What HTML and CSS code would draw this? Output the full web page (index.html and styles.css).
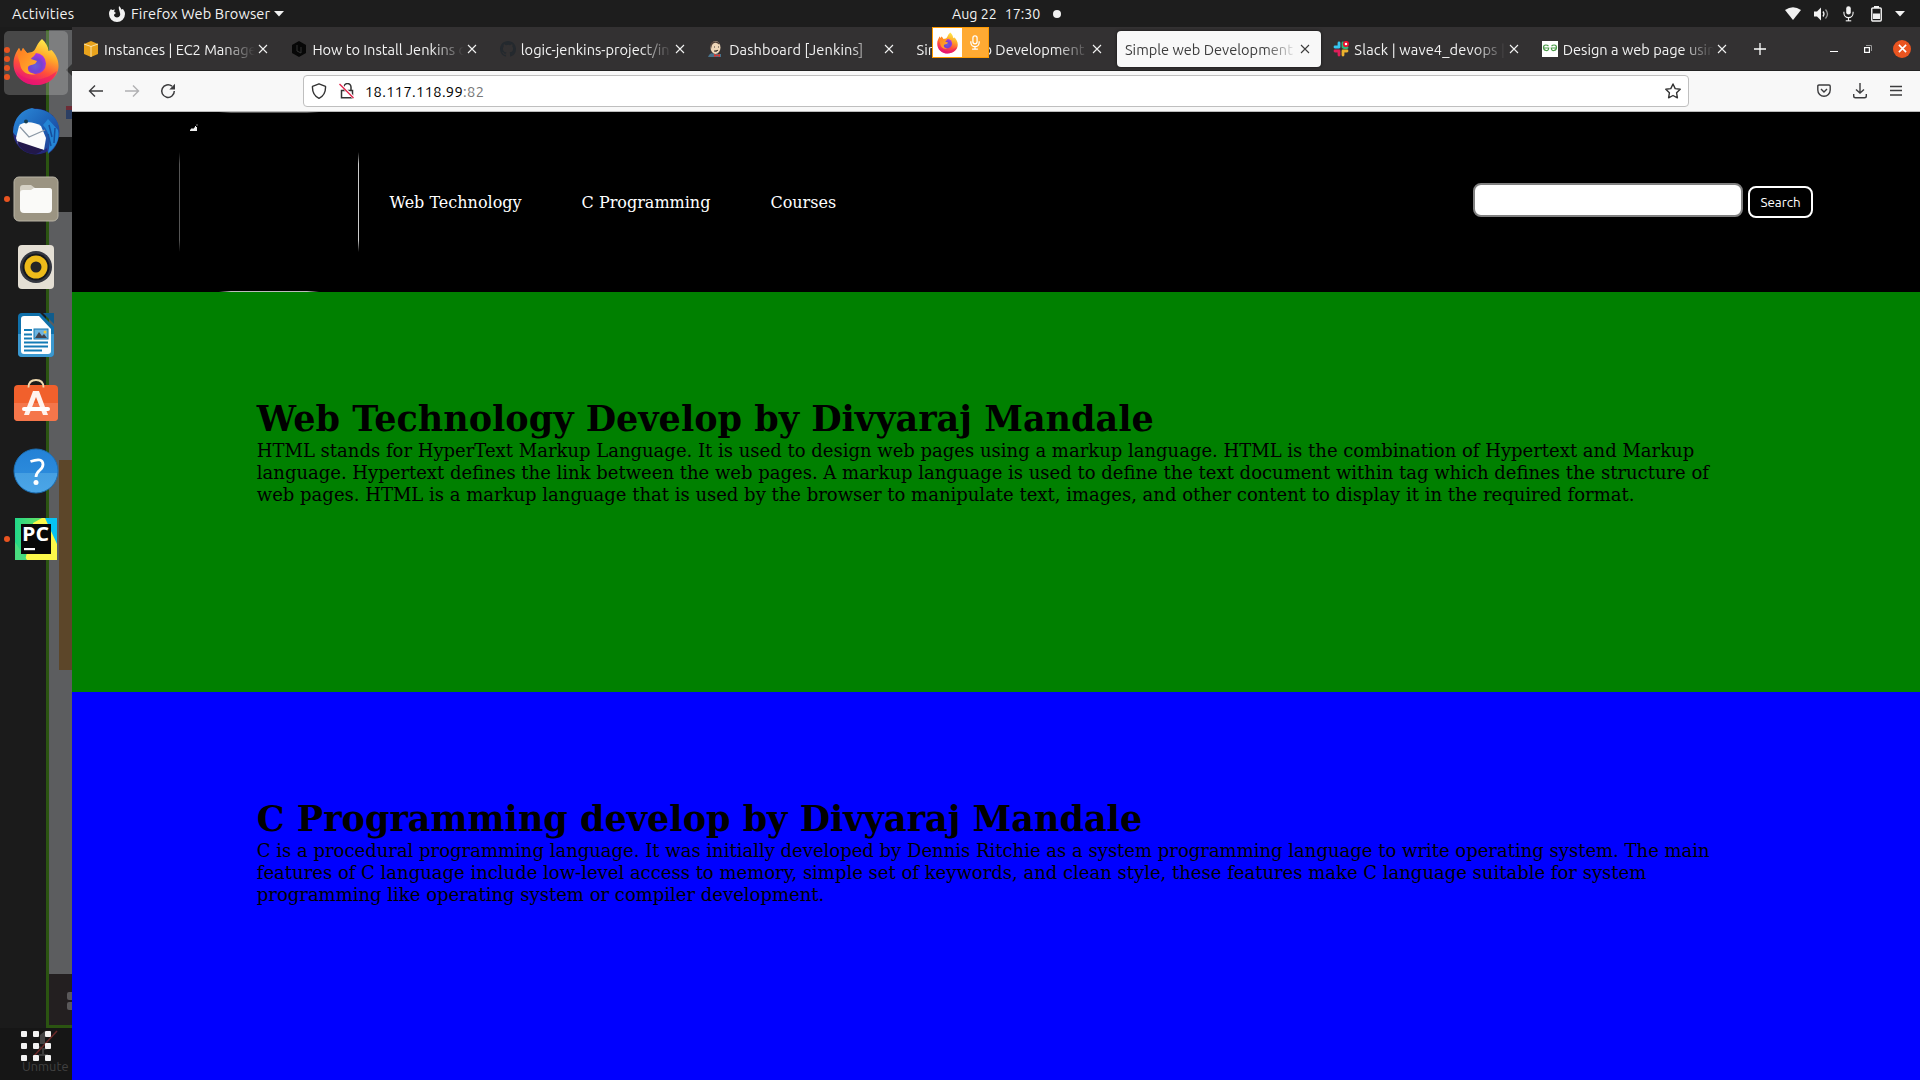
FILE: index.html
```html
<!DOCTYPE html>
<html lang="en">
<head>
<meta charset="utf-8">
<title>Simple web Development</title>
<link rel="stylesheet" href="styles.css">
</head>
<body>
<svg class="defs" width="0" height="0" aria-hidden="true">
  <defs>
    <linearGradient id="fxBody" x1=".75" y1="0" x2=".35" y2="1"><stop offset="0" stop-color="#fff44f"/><stop offset=".35" stop-color="#ffa92a"/><stop offset=".65" stop-color="#ff4f3a"/><stop offset="1" stop-color="#e60f7c"/></linearGradient>
    <radialGradient id="fxGlobe" cx=".5" cy=".6" r=".6"><stop offset="0" stop-color="#6560d8"/><stop offset=".5" stop-color="#7542d0"/><stop offset="1" stop-color="#b833e1"/></radialGradient>
    <linearGradient id="fxHead" x1="0" y1="0" x2="1" y2="1"><stop offset="0" stop-color="#ff7a22"/><stop offset="1" stop-color="#ffb52b"/></linearGradient>
    <linearGradient id="blueHalf" x1="0" y1="0" x2="0" y2="1"><stop offset="0" stop-color="#2381d6"/><stop offset=".54" stop-color="#2b8adb"/><stop offset=".55" stop-color="#459fe2"/><stop offset="1" stop-color="#4ba6e8"/></linearGradient>
    <linearGradient id="tbird" x1="0" y1="0" x2="1" y2="1"><stop offset="0" stop-color="#2d8cdb"/><stop offset=".5" stop-color="#1c62b7"/><stop offset="1" stop-color="#25368a"/></linearGradient>
    <linearGradient id="pyc" x1="0" y1="0" x2="1" y2="0"><stop offset="0" stop-color="#21d789"/><stop offset=".5" stop-color="#5be06a"/><stop offset="1" stop-color="#20d0a0"/></linearGradient>
    <symbol id="firefox" viewBox="0 0 46 48">
      <path d="M29 1c4 4 6 7 6.500 12l3-1c4 4 7 9 7 16 0 11-10 19-22.500 19S.5 38 .5 26C.5 19 3 14 6 10l2 4 2-4 4 5 5-1c4-1 4-8 10-13z" fill="url(#fxBody)"/>
      <circle cx="22.500" cy="25.500" r="10.500" fill="url(#fxGlobe)"/>
      <path d="M6 10l2 4 2-4 4 5h9c-2 4-4 4-5 6l6 2c-2 5-7 3-9 6-1 5 4 7 8 7-8 2-15-2-16-10-1-5-4-9-1-16z" fill="url(#fxHead)"/>
      <path d="M3 33c8 10 25 13 41 0-3 9-11 14-21 14S6 42 3 33z" fill="#e8146f" opacity=".55"/>
    </symbol>
    <symbol id="x" viewBox="0 0 10 10"><path d="M1 1l8 8M9 1L1 9" fill="none" stroke="currentColor" stroke-width="1.100"/></symbol>
    <symbol id="mic" viewBox="0 0 12 18"><rect x="3.500" y="1" width="5" height="9" rx="2.500"/><path d="M1 7v1.500a5 5 0 0010 0V7M6 13.500V17M3 17h6" fill="none" stroke="currentColor" stroke-width="1.200"/></symbol>
  </defs>
</svg>

<header class="topbar">
  <span class="activities">Activities</span>
  <div class="appmenu">
    <svg width="16" height="16" viewBox="0 0 16 16"><path d="M10 0c1 1 2 2 2.300 3.500L14 3c1 1.500 2 3 2 5a8 8 0 01-16 0c0-2 .5-3.500 2-5l1 1 3-.5c-1 1.500-1 2-.5 2.500L7 7c-1 1-2 1-2 2.500C6 12 10 12 11 9.500 12 7 9 4 10 0z" fill="#f2f2f2"/></svg>
    <span class="appname">Firefox Web Browser</span>
    <svg class="caret" width="10" height="6" viewBox="0 0 10 6"><path d="M0 0h10L5 5.500z" fill="#f2f2f2"/></svg>
  </div>
  <div class="clock"><span>Aug 22</span><span>17:30</span><i></i></div>
  <div class="status">
    <svg width="16" height="13" viewBox="0 0 16 13"><path d="M0 3Q8-2.500 16 3L8 13z" fill="#f2f2f2"/></svg>
    <svg width="16" height="14" viewBox="0 0 16 14"><path d="M0 4.500h3L7 .5v13L3 9.500H0z" fill="#f2f2f2"/><path d="M9 4.500q2 2.500 0 5" fill="none" stroke="#f2f2f2" stroke-width="1.300"/><path d="M11.500 2.500q4 4.500 0 9" fill="none" stroke="#999" stroke-width="1.300"/></svg>
    <svg width="11" height="17" viewBox="0 0 12 18" color="#f2f2f2" fill="#f2f2f2"><use href="#mic"/></svg>
    <svg class="battery" width="11" height="16" viewBox="0 0 11 16"><path d="M3 0h5v2H3zM2 7.500h7V13H2z" fill="#f2f2f2"/><rect x=".75" y="2" width="9.500" height="13" rx="1" fill="none" stroke="#f2f2f2" stroke-width="1.400"/></svg>
    <svg width="10" height="6" viewBox="0 0 10 6"><path d="M0 0h10L5 5.500z" fill="#f2f2f2"/></svg>
  </div>
</header>

<div class="desktop">
  <aside class="dock">
    <div class="behind">
      <div class="behind-window"><div class="b-top"></div><div class="b-dark"></div><div class="b-body"><div class="b-brown"></div></div><div class="b-foot"><i></i><i></i></div></div>
      <div class="b-arrow"></div><div class="b-mark"></div>
    </div>
    <ul class="apps">
      <li class="app current"><span class="dots"><i></i><i></i><i></i><i></i></span><svg class="fx" width="46" height="48"><use href="#firefox"/></svg></li>
      <li class="app"><svg width="48" height="48" viewBox="0 0 48 48"><circle cx="24" cy="24.500" r="23" fill="#25277a"/><path d="M1 25C2 10 10 3 20 1l3 1c14 0 25 10 24.500 23C47 36 42 43 36 47l-1-6-6 4 2-9L8 30C3 29 2 27 1 25z" fill="url(#tbird)"/><path d="M7 19c4-5 14-5 22 0l5 12-2 12L6 37 4 31z" fill="#fbfbfb"/><path d="M8 20l9 10 16-7" fill="none" stroke="#8b98a5" stroke-width="1.200"/><path d="M5 34l27 9-8 4C15 47 8 43 5 34z" fill="#22184a"/><path d="M31 18c7 8 8 17 5 28 8-6 12-14 10-23L36 12z" fill="#2385d5"/><path d="M37 18l3 12m3-9l-1 15m-6-9l3 12" stroke="#164e9d" stroke-width="1.500"/><circle cx="14" cy="14.500" r="2" fill="#173e4f"/></svg></li>
      <li class="app"><span class="dots"><i></i></span><svg width="46" height="46" viewBox="0 0 46 46"><rect x="1" y="1" width="44" height="44" rx="5" fill="#9b9482" stroke="#b9b4a5"/><path d="M7 12q0-3 3-3h8l4 3h14q3 0 3 3v8H7z" fill="#d5d1c5"/><path d="M7 17q0-3 3-3h8l3-2h15q3 0 3 3v18q0 4-4 4H11q-4 0-4-4z" fill="#fafaf8"/></svg></li>
      <li class="app"><svg width="38" height="46" viewBox="0 0 38 46"><rect x="1" y="1" width="36" height="44" rx="4" fill="#e4dfd4"/><circle cx="19" cy="23" r="16" fill="#343740"/><circle cx="19" cy="23" r="13.500" fill="#16191d"/><circle cx="19" cy="23" r="11.500" fill="#edbb1a"/><circle cx="19" cy="23" r="5.500" fill="#242526"/></svg></li>
      <li class="app"><svg width="38" height="46" viewBox="0 0 38 46"><path d="M5 1h18l14 14v26q0 4-4 4H5q-4 0-4-4V5q0-4 4-4z" fill="#0f70aa"/><path d="M1 22h36v19q0 4-4 4H5q-4 0-4-4z" fill="#3b98cf"/><path d="M26 1h11v11z" fill="#105c8b"/><path d="M7 4h15l12 13v22q0 3-3 3H7q-3 0-3-3V7q0-3 3-3z" fill="#fff"/><path d="M7 18h8M7 22.500h8M7 26.500h8M7 30.500h24M7 34.500h24M7 38.500h18" stroke="#137bb5" stroke-width="2"/><rect x="17" y="17" width="14" height="10" fill="#6db4e1"/><path d="M18 26l4-6 3 4 2-2 3 4z" fill="#42434c"/><circle cx="28" cy="20" r="1.500" fill="#f4c637"/><rect x="17" y="17" width="14" height="10" fill="none" stroke="#1779b1"/></svg></li>
      <li class="app"><svg width="46" height="46" viewBox="0 0 46 46"><rect x="1" y="7" width="44" height="36" rx="4" fill="#f1602c"/><path d="M1 25h44v14q0 4-4 4H5q-4 0-4-4z" fill="#f5764a"/><path d="M15.500 9.500q0-7.500 7.500-7.500t7.500 7.500" fill="none" stroke="#f0dab0" stroke-width="1.800"/><path d="M20 13h6l9 24h-5l-7-18-7 18h-5z" fill="#fff3ee"/><rect x="9" y="29" width="28" height="4" rx="2" fill="#fff"/></svg></li>
      <li class="app"><svg width="46" height="46" viewBox="0 0 46 46"><circle cx="23" cy="23" r="22" fill="url(#blueHalf)" stroke="#1c70b5"/><path d="M17.500 13.500q12.500-4.500 12.500 3c0 6-7 5.500-7 12.500" fill="none" stroke="#fff" stroke-width="2.800"/><circle cx="23" cy="34.500" r="2.500" fill="#fff"/></svg></li>
      <li class="app"><span class="dots"><i></i></span><svg width="42" height="42" viewBox="0 0 42 42"><path d="M0 0h42v42H0z" fill="url(#pyc)"/><path d="M30 0h12v32z" fill="#07c3f2"/><path d="M18 5l9-5h3l12 26v16H10l8-30z" fill="#fcf84a"/><path d="M0 24l12 18H0z" fill="#49dc7f"/><rect x="6" y="6" width="30" height="30" fill="#080808"/><text x="7" y="23" textLength="27" lengthAdjust="spacingAndGlyphs" class="pc">PC</text><path d="M9 30h11v2.200H9z" fill="#fff"/></svg></li>
    </ul>
    <div class="launcher">
      <svg width="38" height="32" viewBox="0 0 38 32" fill="#f2f2f2"><path d="M20 5l5-4v13h-5z" fill="#444"/><path d="M18 16q6 6 12 0M23 19v6m-4 0h9" stroke="#3c3c3c" stroke-width="2" fill="none"/><path d="M13 27L37 1" stroke="#6b2a2a" stroke-width="1.500"/><g><rect x="1" y="1" width="6" height="6" rx="1"/><rect x="13" y="1" width="6" height="6" rx="1"/><rect x="25" y="1" width="6" height="6" rx="1"/><rect x="1" y="13" width="6" height="6" rx="1"/><rect x="13" y="13" width="6" height="6" rx="1"/><rect x="25" y="13" width="6" height="6" rx="1"/><rect x="1" y="25" width="6" height="6" rx="1"/><rect x="13" y="25" width="6" height="6" rx="1"/><rect x="25" y="25" width="6" height="6" rx="1"/></g></svg>
      <span class="unmute">Unmute</span>
    </div>
  </aside>

  <main class="browser">
    <div class="tabstrip">
      <div class="tab"><svg width="16" height="16" viewBox="0 0 16 16"><path d="M1 3l7-3 7 3v10l-7 3-7-3z" fill="#e9a31c"/><path d="M1 3l7 2.500L15 3M8 5.500V16" stroke="#fff0c8" fill="none" stroke-width=".8"/></svg><span class="title">Instances | EC2 Manage</span><svg class="x" width="10" height="10"><use href="#x"/></svg></div>
      <div class="tab"><svg width="16" height="16" viewBox="0 0 16 16"><path d="M8 0l7 4v8l-7 4-7-4V4z" fill="#070707"/><path d="M6 4v6l4 2V6" fill="none" stroke="#333"/></svg><span class="title">How to Install Jenkins o</span><svg class="x" width="10" height="10"><use href="#x"/></svg></div>
      <div class="tab"><svg width="16" height="16" viewBox="0 0 16 16"><path d="M8 0C3.580 0 0 3.580 0 8c0 3.540 2.290 6.530 5.470 7.590.4.070.55-.17.55-.38v-1.490c-2.010.37-2.530-.49-2.690-.94-.09-.23-.48-.94-.82-1.130-.28-.15-.68-.52-.01-.53.63-.01 1.080.58 1.230.82.72 1.210 1.870.87 2.330.66.070-.52.28-.87.51-1.070-1.780-.2-3.640-.89-3.640-3.950 0-.87.31-1.590.82-2.150-.08-.2-.36-1.020.08-2.120 0 0 .67-.21 2.200.82a7.600 7.600 0 014 0c1.530-1.040 2.200-.82 2.200-.82.44 1.100.16 1.920.08 2.120.51.560.82 1.270.82 2.150 0 3.070-1.870 3.750-3.650 3.950.29.25.54.73.54 1.480v2.200c0 .21.15.46.55.38A8 8 0 0016 8c0-4.420-3.580-8-8-8z" fill="#24292e"/></svg><span class="title">logic-jenkins-project/in</span><svg class="x" width="10" height="10"><use href="#x"/></svg></div>
      <div class="tab"><svg width="16" height="16" viewBox="0 0 16 16"><path d="M1 14q2-3 5-1h7v3H0z" fill="#49728b"/><ellipse cx="7.500" cy="6.500" rx="5" ry="6.500" fill="#efd6b8"/><path d="M3 8Q1 2 5 .5q4-1 7 2l-1 1Q7 0 4 4z" fill="#55443c"/><path d="M6 6h1m3 0h1M6 10q3 1 4-1" stroke="#403630"/><path d="M6 13l3 1 3-1v3l-3-1-3 1z" fill="#d33833"/></svg><span class="title whole">Dashboard [Jenkins]</span><svg class="x" width="10" height="10"><use href="#x"/></svg></div>
      <div class="tab"><span class="title">Simple web Development</span><svg class="x" width="10" height="10"><use href="#x"/></svg></div>
      <div class="tab active"><span class="title">Simple web Development</span><svg class="x" width="10" height="10"><use href="#x"/></svg></div>
      <div class="tab"><svg width="16" height="16" viewBox="0 0 16 16" stroke-width="2.800" stroke-linecap="round"><path d="M6 2v4M2 6h4" stroke="#36c5f0"/><path d="M10 2v4" stroke="#2eb67d"/><path d="M10 10h4M10 10v4" stroke="#ecb22e"/><path d="M2 10h4M6 10v4" stroke="#e01e5a"/><path d="M11 6.500h3" stroke="#2eb67d"/><circle cx="13" cy="3" r="2.200" fill="#fff" stroke="#e8102e" stroke-width="1.800"/></svg><span class="title slack">Slack | wave4_devops |</span><svg class="x" width="10" height="10"><use href="#x"/></svg></div>
      <div class="tab"><svg width="16" height="16" viewBox="0 0 16 16"><path d="M0 0h16v16H0z" fill="#fff"/><path d="M6.500 5.200Q5.500 4 3.800 4 1.500 4 1.500 6.500T4 9.500 6.700 7H1M9.500 5.200Q10.500 4 12.200 4q2.300 0 2.300 2.500T12 9.500 9.300 7H15" fill="none" stroke="#4a9b48" stroke-width="1.200"/></svg><span class="title">Design a web page usin</span><svg class="x" width="10" height="10"><use href="#x"/></svg></div>
      <svg class="plus" width="12" height="12" viewBox="0 0 12 12"><path d="M6 0v12M0 6h12" stroke="#fff" stroke-width="1.300"/></svg>
      <div class="wincontrols">
        <svg width="8" height="8" viewBox="0 0 8 8"><path d="M0 6.500h8" stroke="#fff"/></svg>
        <svg width="8" height="8" viewBox="0 0 8 8"><rect x=".6" y="2.600" width="4.800" height="4.800" fill="none" stroke="#fff" stroke-width="1.200"/><path d="M2 .5h5.500V6" fill="none" stroke="#999"/></svg>
        <span class="winclose"><svg width="9" height="9" viewBox="0 0 10 10"><path d="M1 1l8 8M9 1L1 9" stroke="#fff" stroke-width="1.800"/></svg></span>
      </div>
      <div class="sharing"><span><svg width="21" height="22" viewBox="0 0 46 48"><use href="#firefox"/></svg></span><span class="sharing-mic"><svg width="10" height="15" viewBox="0 0 12 18" fill="none" stroke="#fff" stroke-width="1.500"><rect x="3.500" y="1" width="5" height="9.500" rx="2.500"/><path d="M1 7.500V9a5 5 0 0010 0V7.500M6 14v3M2.500 17h7"/></svg></span></div>
    </div>

    <div class="toolbar">
      <div class="navbuttons">
        <svg width="16" height="14" viewBox="0 0 16 14"><path d="M15 7H1.500M7 1.500L1.500 7 7 12.500" fill="none" stroke="#3c3c3e" stroke-width="1.400"/></svg>
        <svg width="16" height="14" viewBox="0 0 16 14"><path d="M1 7h13.500M9 1.500L14.500 7 9 12.500" fill="none" stroke="#b0b0b2" stroke-width="1.400"/></svg>
        <svg width="16" height="16" viewBox="0 0 16 16"><path d="M14.300 8A6.300 6.300 0 1112 3.200" fill="none" stroke="#3c3c3e" stroke-width="1.500"/><path d="M15 .8v5.700H9.300z" fill="#3c3c3e"/></svg>
      </div>
      <div class="urlbar">
        <svg width="16" height="16" viewBox="0 0 16 16"><path d="M8 .8l6.500 2.500c.3 5-1.500 9.500-6.500 12C3 12.800 1.200 8.300 1.500 3.300z" fill="none" stroke="#333" stroke-width="1.400" stroke-linejoin="round"/></svg>
        <svg class="lock" width="16" height="16" viewBox="0 0 16 16"><path d="M5 7.500V4a3.500 3.500 0 017 0v3.500M2.500 7.500h11v7.300h-11z" fill="none" stroke="#333" stroke-width="1.500"/><path d="M1 1l14 14" stroke="#fff" stroke-width="3"/><path d="M.5 1l14 14" stroke="#e2264d" stroke-width="1.500"/></svg>
        <span class="url">18.117.118.99<em>:82</em></span>
        <svg class="star" width="16" height="16" viewBox="0 0 16 16"><path d="M8 1l2.200 4.600 5 .7-3.600 3.500.8 5L8 12.500l-4.400 2.300.8-5L.8 6.300l5-.7z" fill="none" stroke="#333" stroke-width="1.400" stroke-linejoin="round"/></svg>
      </div>
      <div class="tools">
        <svg width="14" height="14" viewBox="0 0 14 14"><path d="M2 1h10q1.200 0 1.200 1.200V6A6.200 6.200 0 01.8 6V2.200Q.8 1 2 1zM4 5l3 3 3-3" fill="none" stroke="#3c3c3e" stroke-width="1.400"/></svg>
        <svg width="14" height="16" viewBox="0 0 14 16"><path d="M7 0v10M3 6.500L7 10l4-3.500M.7 11v2q0 1.800 1.800 1.800h9q1.800 0 1.800-1.800v-2" fill="none" stroke="#3c3c3e" stroke-width="1.400"/></svg>
        <svg width="12" height="12" viewBox="0 0 12 12"><path d="M0 1.500h12M0 5.500h12M0 10h12" stroke="#3c3c3e" stroke-width="1.300"/></svg>
      </div>
    </div>

    <div class="page">
      <nav class="sitenav">
        <div class="logo"><svg width="8" height="8" viewBox="0 0 8 8"><path d="M0 7V6l2-2 1 1 2-2h2v4zM5 2h1v1H5zM6.500.5h1v1h-1z" fill="#eee"/></svg></div>
        <ul class="links"><li>Web Technology</li><li>C Programming</li><li>Courses</li></ul>
        <div class="search"><input type="text" class="query"><button class="go">Search</button></div>
      </nav>
      <section class="panel green">
        <h1>Web Technology Develop by Divyaraj Mandale</h1>
        <p>HTML stands for HyperText Markup Language. It is used to design web pages using a markup language. HTML is the combination of Hypertext and Markup<br>language. Hypertext defines the link between the web pages. A markup language is used to define the text document within tag which defines the structure of<br>web pages. HTML is a markup language that is used by the browser to manipulate text, images, and other content to display it in the required format.</p>
      </section>
      <section class="panel blue">
        <h1>C Programming develop by Divyaraj Mandale</h1>
        <p>C is a procedural programming language. It was initially developed by Dennis Ritchie as a system programming language to write operating system. The main<br>features of C language include low-level access to memory, simple set of keywords, and clean style, these features make C language suitable for system<br>programming like operating system or compiler development.</p>
      </section>
    </div>
  </main>
</div>
</body>
</html>
```
FILE: styles.css
```css
* { box-sizing: border-box; margin: 0; padding: 0; }
body {
  width: 1920px; height: 1080px; overflow: hidden;
  display: flex; flex-direction: column;
  font-family: Ubuntu, "Noto Sans", sans-serif; font-size: 14.600px; color: #f2f2f2;
  background: #1b1b1b;
}
svg { display: block; flex: none; }
ul { list-style: none; }
.defs { position: absolute; }

.topbar {
  position: relative; height: 27px; flex: none; background: #1d1d1d;
  display: flex; align-items: center; padding: 0 15px 0 12px; line-height: 28px;
}
.activities { width: 97px; letter-spacing: .25px; }
.appmenu { display: flex; align-items: center; }
.appname { margin-left: 6px; width: 140px; white-space: nowrap; letter-spacing: .1px; }
.caret { margin-left: 3px; }
.clock { display: flex; align-items: center; margin-left: 668px; gap: 8px; white-space: nowrap; font-size: 14.200px; }
.clock i { width: 8px; height: 8px; border-radius: 50%; background: #f2f2f2; margin-left: 5px; }
.status { display: flex; align-items: center; margin-left: auto; gap: 13px; }
.battery { margin-left: 4px; }

.desktop { display: flex; flex: 1; min-height: 0; }
.dock { position: relative; width: 72px; flex: none; display: flex; flex-direction: column; background: #1b1b1b; overflow: hidden; }
.behind { position: absolute; left: 46px; top: 3px; width: 26px; height: 998px; }
.behind-window { height: 998px; border-left: 3px solid #2b5411; border-bottom: 3px solid #2b5411; display: flex; flex-direction: column; background: #5c5d5f; }
.b-top { height: 107px; background: #5d5e60; }
.b-dark { height: 75px; background: #1a1a1a; }
.b-body { flex: 1; padding: 248px 0 0 10px; }
.b-brown { height: 210px; background: #5c4629; }
.b-foot { height: 51px; background: #231f20; display: flex; flex-direction: column; gap: 2px; align-items: flex-end; padding-top: 18px; }
.b-foot i { width: 5px; height: 8px; background: #5a5859; border-radius: 2px 0 0 2px; }
.b-arrow { position: absolute; right: 0; top: 34px; border: 6px solid transparent; border-left: 0; border-right-color: #333; }
.b-mark { position: absolute; right: 0; top: 76px; width: 6px; height: 13px; background: #2c3f63; border-top: 4px solid #6d2b35; }
.apps { position: relative; display: flex; flex-direction: column; gap: 4px; padding: 4px 4px 0; }
.app { position: relative; width: 64px; height: 64px; border-radius: 5px; display: flex; align-items: center; justify-content: center; }
.app svg { margin-bottom: 1px; }
.app .fx { margin-bottom: 3px; }
.app:nth-child(6) svg { margin-bottom: 5px; }
.current { background: rgba(255, 255, 255, .2); }
.dots { position: absolute; left: 0; top: 0; height: 64px; display: flex; flex-direction: column; justify-content: center; gap: 3px; }
.dots i { width: 6px; height: 6px; border-radius: 50%; background: #e95420; }
.pc { font: bold 20px "Open Sans", sans-serif; fill: #fff; }
.launcher { position: relative; margin-top: auto; padding: 2px 0 5px 20px; background: #161616; height: 52px; }
.unmute { display: block; padding-left: 2px; font-size: 12.800px; line-height: 13px; margin-top: -2px; color: #414141; }

.browser { flex: 1; min-width: 0; display: flex; flex-direction: column; }
.tabstrip {
  position: relative; height: 44px; flex: none; display: flex; align-items: center; padding-left: 1px;
  background: #333132; border-bottom: 1px solid #222;
}
.tab {
  width: 204.4px; height: 36px; margin: 1px 2px 0; padding: 0 11px 0 8px; border-radius: 4px;
  display: flex; align-items: center; flex: none;
}
.tab > svg:first-child { margin-right: 5px; }
.title {
  flex: 1; min-width: 0; overflow: hidden; white-space: nowrap; line-height: 22px; padding-top: 1px; margin-right: 1px;
  -webkit-mask-image: linear-gradient(to right, #000 calc(100% - 34px), transparent calc(100% - 2px));
  mask-image: linear-gradient(to right, #000 calc(100% - 34px), transparent calc(100% - 2px));
}
.whole { letter-spacing: .1px; }
.slack { letter-spacing: .15px; }
.active { background: #f8f8f8; color: #3d3d3d; box-shadow: 0 0 3px #111; }
.plus { margin-left: 14px; }
.wincontrols { display: flex; align-items: center; margin-left: 64px; gap: 26px; }
.winclose { width: 18px; height: 18px; margin-left: -5px; border-radius: 50%; background: #e95420; display: grid; place-items: center; }
.sharing { position: absolute; left: 860px; top: 0; width: 57px; height: 31px; border: 1px solid #ff9a00; background: #fff; display: flex; }
.sharing span { width: 29px; display: grid; place-items: center; }
.sharing .sharing-mic { width: 26px; background: #ffaa33; }

.toolbar { height: 41px; flex: none; background: #f8f8f8; border-bottom: 1px solid #bbb; display: flex; align-items: center; padding: 0 18px 0 16px; }
.navbuttons { display: flex; align-items: center; gap: 20px; width: 215px; }
.urlbar { width: 1386px; height: 32px; border: 1px solid #bfbfbf; border-radius: 4px; background: #fff; display: flex; align-items: center; padding: 0 7px; }
.lock { margin-left: 12px; }
.url { margin-left: 10px; color: #000; line-height: 30px; padding-top: 1px; font-size: 14.700px; letter-spacing: .34px; }
.url em { font-style: normal; color: #777; }
.star { margin-left: auto; }
.tools { margin-left: auto; display: flex; align-items: center; gap: 22px; }
.tools svg:last-child { margin-left: 1px; }

.page { flex: 1; min-height: 0; overflow: hidden; display: flex; flex-direction: column; font-family: "DejaVu Serif", serif; color: #000; }
.sitenav { height: 180px; flex: none; background: #000; display: flex; align-items: center; padding: 0 107px; }
.logo {
  width: 180px; height: 180px; padding: 12px 11px;
  background:
    linear-gradient(to bottom, transparent, #555 12%, #555 88%, transparent) left 40px / 1px 100px no-repeat,
    linear-gradient(to bottom, transparent, #ccc 12%, #ccc 88%, transparent) right 40px / 1px 100px no-repeat,
    linear-gradient(to right, transparent, #555 12%, #555 88%, transparent) 40px top / 100px 1px no-repeat,
    linear-gradient(to right, transparent, #bbb 12%, #bbb 88%, transparent) 40px bottom / 100px 1px no-repeat;
}
.links { display: flex; gap: 60px; margin-left: 30.500px; padding-top: 2px; color: #fff; font-size: 16px; line-height: 20px; }
.search { margin-left: auto; margin-bottom: 3px; display: flex; gap: 5px; align-items: flex-start; }
.query { width: 270px; height: 34px; border: 2px solid #808080; border-radius: 8px; background: #fff; }
.go { width: 65px; height: 32px; margin-top: 3px; border: 2px solid #fff; border-radius: 8px; background: #000; color: #fff; font: 13.400px Ubuntu, "Noto Sans", sans-serif; }
.panel { height: 400px; flex: none; padding: 106px 0 0 184.8px; white-space: nowrap; }
.green { background: #008000; }
.blue { background: #0000ff; }
.panel h1 { font-size: 35px; line-height: 41px; }
.panel p { margin-top: 1px; font-size: 18px; line-height: 22px; }
```
